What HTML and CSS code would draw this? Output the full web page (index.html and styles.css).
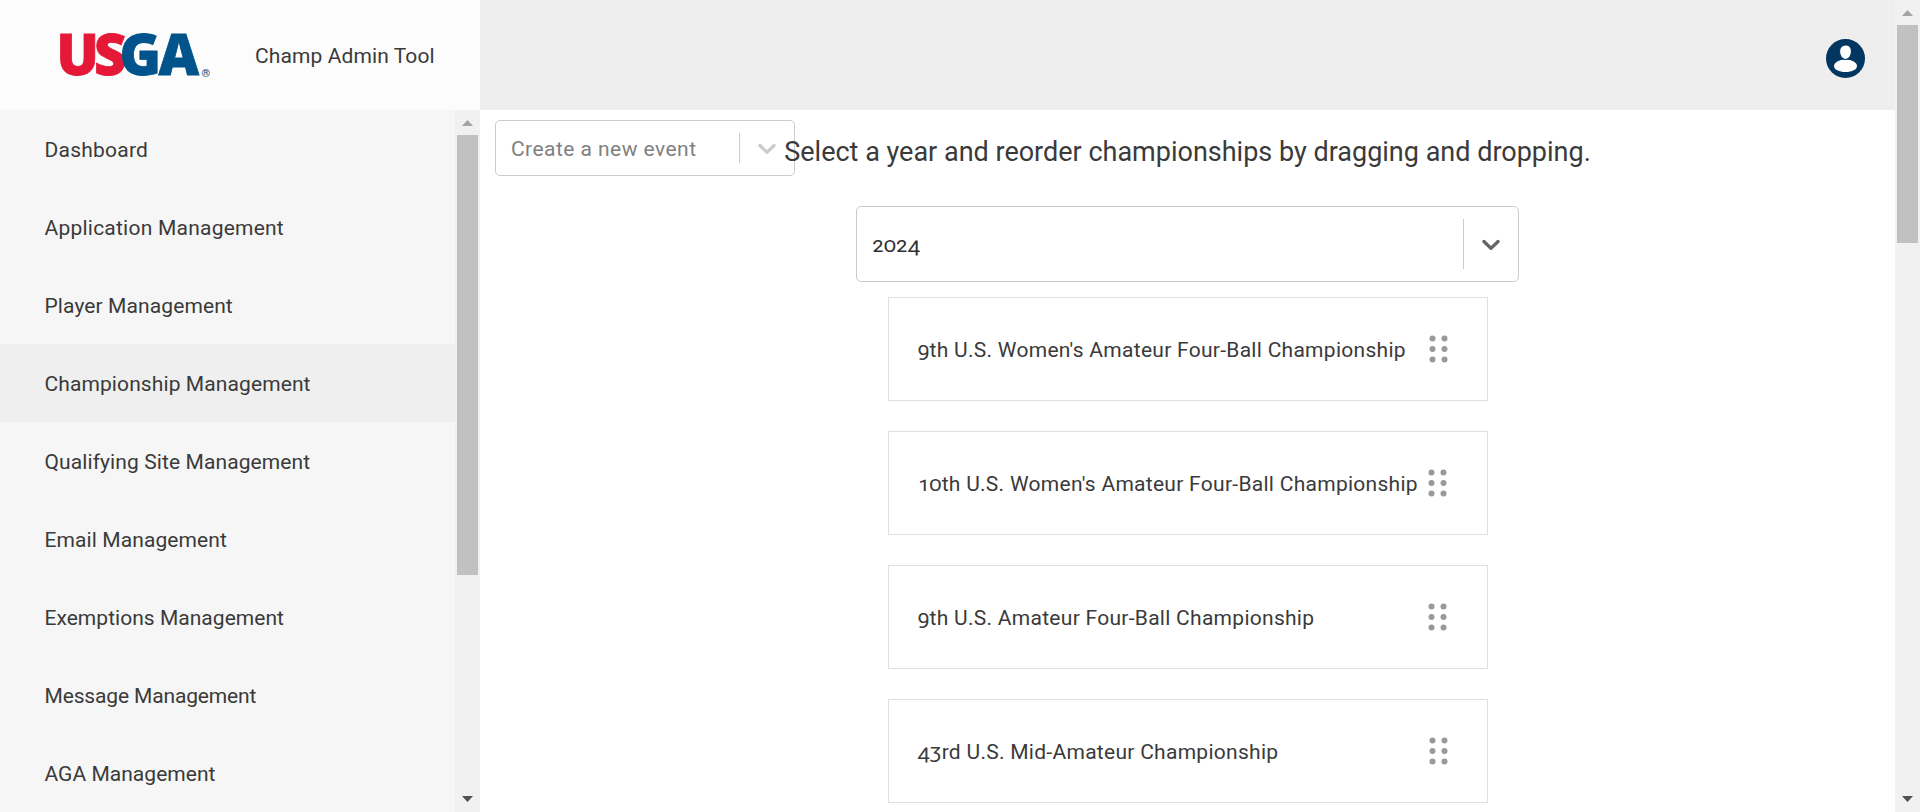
FILE: index.html
```html
<!DOCTYPE html>
<html lang="en">
<head>
<meta charset="utf-8">
<title>Champ Admin Tool</title>
<link rel="stylesheet" href="styles.css">
</head>
<body>
<div class="app">
  <aside class="side">
    <div class="brand">
      <svg class="logo" width="152" height="46" viewBox="0 0 152 46" role="img" aria-label="USGA">
        <text class="logo-text" y="43"><tspan class="red" x="-3.600 34">US</tspan><tspan class="blue" x="59.500 98.500">GA</tspan></text>
        <text class="reg" x="141.500" y="44.500">®</text>
      </svg>
      <span class="brand-name">Champ Admin Tool</span>
    </div>
    <div class="side-body">
      <nav class="nav">
        <a class="nav-item t-wide">Dashboard</a>
        <a class="nav-item t-wide">Application Management</a>
        <a class="nav-item">Player Management</a>
        <a class="nav-item active">Championship Management</a>
        <a class="nav-item">Qualifying Site Management</a>
        <a class="nav-item">Email Management</a>
        <a class="nav-item t-snug">Exemptions Management</a>
        <a class="nav-item t-tight">Message Management</a>
        <a class="nav-item t-snug">AGA Management</a>
      </nav>
      <div class="scroll">
        <svg class="arrow up" width="11" height="6" viewBox="0 0 11 6"><path d="M0 6L5.500 0L11 6Z"/></svg>
        <div class="thumb thumb-side"></div>
        <svg class="arrow down" width="11" height="6" viewBox="0 0 11 6"><path d="M0 0L5.500 6L11 0Z"/></svg>
      </div>
    </div>
  </aside>
  <div class="page">
    <header class="topbar">
      <svg class="avatar" width="39" height="39" viewBox="0 0 39 39">
        <circle class="navy" cx="19.500" cy="19.500" r="19.500"/>
        <path class="white" d="M19.500 20.500C26 20.500 31 23.500 31 27C31 30.500 26 33 19.500 33C13 33 8 30.500 8 27C8 23.500 13 20.500 19.500 20.500Z"/>
        <path class="head" d="M19.500 6C23.500 6 25.500 8.500 25.500 12.500C25.500 17 23 20.500 19.500 20.500C16 20.500 13.500 17 13.500 12.500C13.500 8.500 15.500 6 19.500 6Z"/>
      </svg>
    </header>
    <main class="main">
      <div class="select create">
        <span class="value">Create a new event</span>
        <span class="sep"></span>
        <svg class="chev" width="30" height="30" viewBox="0 0 20 20"><path d="M4.516 7.548c0.436-0.446 1.043-0.481 1.576 0l3.908 3.747 3.908-3.747c0.533-0.481 1.141-0.446 1.574 0 0.436 0.445 0.408 1.197 0 1.615-0.406 0.418-4.695 4.502-4.695 4.502-0.217 0.223-0.502 0.335-0.787 0.335s-0.570-0.112-0.789-0.335c0 0-4.287-4.084-4.695-4.502s-0.436-1.170 0-1.615z"/></svg>
      </div>
      <h1 class="title">Select a year and reorder championships by dragging and dropping.</h1>
      <div class="select year">
        <span class="value">2024</span>
        <span class="sep"></span>
        <svg class="chev" width="30" height="30" viewBox="0 0 20 20"><path d="M4.516 7.548c0.436-0.446 1.043-0.481 1.576 0l3.908 3.747 3.908-3.747c0.533-0.481 1.141-0.446 1.574 0 0.436 0.445 0.408 1.197 0 1.615-0.406 0.418-4.695 4.502-4.695 4.502-0.217 0.223-0.502 0.335-0.787 0.335s-0.570-0.112-0.789-0.335c0 0-4.287-4.084-4.695-4.502s-0.436-1.170 0-1.615z"/></svg>
      </div>
      <div class="cards">
        <div class="card"><span>9th U.S. Women's Amateur Four-Ball Championship</span><svg class="grip shift" width="19" height="29" viewBox="0 0 19 29"><circle cx="3.500" cy="3.500" r="3"/><circle cx="15.500" cy="3.500" r="3"/><circle cx="3.500" cy="14" r="3"/><circle cx="15.500" cy="14" r="3"/><circle cx="3.500" cy="24.500" r="3"/><circle cx="15.500" cy="24.500" r="3"/></svg></div>
        <div class="card"><span>10th U.S. Women's Amateur Four-Ball Championship</span><svg class="grip" width="19" height="29" viewBox="0 0 19 29"><circle cx="3.500" cy="3.500" r="3"/><circle cx="15.500" cy="3.500" r="3"/><circle cx="3.500" cy="14" r="3"/><circle cx="15.500" cy="14" r="3"/><circle cx="3.500" cy="24.500" r="3"/><circle cx="15.500" cy="24.500" r="3"/></svg></div>
        <div class="card"><span>9th U.S. Amateur Four-Ball Championship</span><svg class="grip" width="19" height="29" viewBox="0 0 19 29"><circle cx="3.500" cy="3.500" r="3"/><circle cx="15.500" cy="3.500" r="3"/><circle cx="3.500" cy="14" r="3"/><circle cx="15.500" cy="14" r="3"/><circle cx="3.500" cy="24.500" r="3"/><circle cx="15.500" cy="24.500" r="3"/></svg></div>
        <div class="card"><span>43rd U.S. Mid-Amateur Championship</span><svg class="grip shift" width="19" height="29" viewBox="0 0 19 29"><circle cx="3.500" cy="3.500" r="3"/><circle cx="15.500" cy="3.500" r="3"/><circle cx="3.500" cy="14" r="3"/><circle cx="15.500" cy="14" r="3"/><circle cx="3.500" cy="24.500" r="3"/><circle cx="15.500" cy="24.500" r="3"/></svg></div>
      </div>
    </main>
  </div>
  <div class="scroll">
    <svg class="arrow up" width="11" height="6" viewBox="0 0 11 6"><path d="M0 6L5.500 0L11 6Z"/></svg>
    <div class="thumb thumb-page"></div>
    <svg class="arrow down" width="11" height="6" viewBox="0 0 11 6"><path d="M0 0L5.500 6L11 0Z"/></svg>
  </div>
</div>
</body>
</html>
```
FILE: styles.css
```css
* { box-sizing: border-box; }
body {
  margin: 0;
  height: 812px;
  overflow: hidden;
  background: #fff;
  color: #3a3a3a;
  font-family: Roboto, "Liberation Sans", sans-serif;
  font-size: 21px;
  font-weight: 400;
  font-variant-numeric: oldstyle-nums;
  letter-spacing: .1px;
}
svg { display: block; flex: none; }
.app { display: flex; height: 812px; }
.side { width: 480px; flex: none; display: flex; flex-direction: column; }
.brand { height: 110px; flex: none; background: #fcfcfc; display: flex; align-items: flex-start; padding: 32px 0 0 60px; }
.logo { overflow: visible; }
.logo-text { font-family: "Open Sans", sans-serif; font-weight: 800; font-size: 56px; letter-spacing: 0; stroke-width: .8px; }
.red { fill: #e51937; stroke: #e51937; }
.blue { fill: #00538b; stroke: #00538b; }
.reg { fill: #00538b; font-size: 11px; font-weight: 500; }
.brand-name { margin: 11px 0 0 43px; line-height: 26px; }
.side-body { flex: 1; display: flex; min-height: 0; background: #f6f6f6; }
.nav { flex: 1; display: flex; flex-direction: column; overflow: hidden; }
.nav-item { height: 78px; flex: none; display: flex; align-items: center; padding: 2px 0 0 44.5px; }
.t-wide { letter-spacing: .23px; }
.t-snug { letter-spacing: .03px; }
.t-tight { letter-spacing: -.15px; }
.active { background: #efefef; }
.scroll { width: 25px; flex: none; background: #f1f1f1; display: flex; flex-direction: column; align-items: center; }
.arrow.up { margin: 10px 0 9px; fill: #a3a3a3; }
.arrow.down { margin: auto 0 10px; fill: #505050; }
.thumb { width: 21px; background: #c1c1c1; }
.thumb-side { height: 440px; }
.thumb-page { height: 218px; }
.page { flex: 1; display: flex; flex-direction: column; min-width: 0; }
.topbar { height: 110px; flex: none; background: #eee; display: flex; justify-content: flex-end; padding: 39px 30px 0 0; }
.navy { fill: #003660; }
.white { fill: #fff; }
.head { fill: #fff; stroke: #003660; stroke-width: 1.200px; }
.main { flex: 1; position: relative; display: flex; flex-direction: column; align-items: center; padding-top: 23px; overflow: hidden; }
.select { display: flex; align-items: center; border: 1px solid #ccc; border-radius: 5px; font-weight: 450; padding-right: 12px; }
.value { flex: 1; padding: 2px 0 0 15px; }
.sep { width: 1px; align-self: stretch; background: #ccc; margin: 12px 12px 12px 0; }
/* The event picker floats over the top-left corner of the content area. */
.create { position: absolute; left: 15px; top: 10px; width: 300px; height: 56px; background: #fff; color: #808080; letter-spacing: .45px; }
.create .chev { fill: #ccc; }
.title { position: relative; margin: 0; font-size: 27px; font-weight: 400; line-height: 38px; letter-spacing: 0; }
.year { width: 663px; height: 76px; margin-top: 35px; color: #303030; }
.year .chev { fill: #666; }
.cards { display: flex; flex-direction: column; gap: 30px; margin-top: 15px; }
.card { width: 600px; height: 104px; border: 1px solid #e0e0e0; display: flex; align-items: center; justify-content: space-between; padding: 0 39.5px 0 29px; letter-spacing: .28px; }
.card span { white-space: nowrap; padding-top: 2px; }
.grip { fill: #999; margin-left: -20px; }
.shift { margin-right: -1px; }
```
